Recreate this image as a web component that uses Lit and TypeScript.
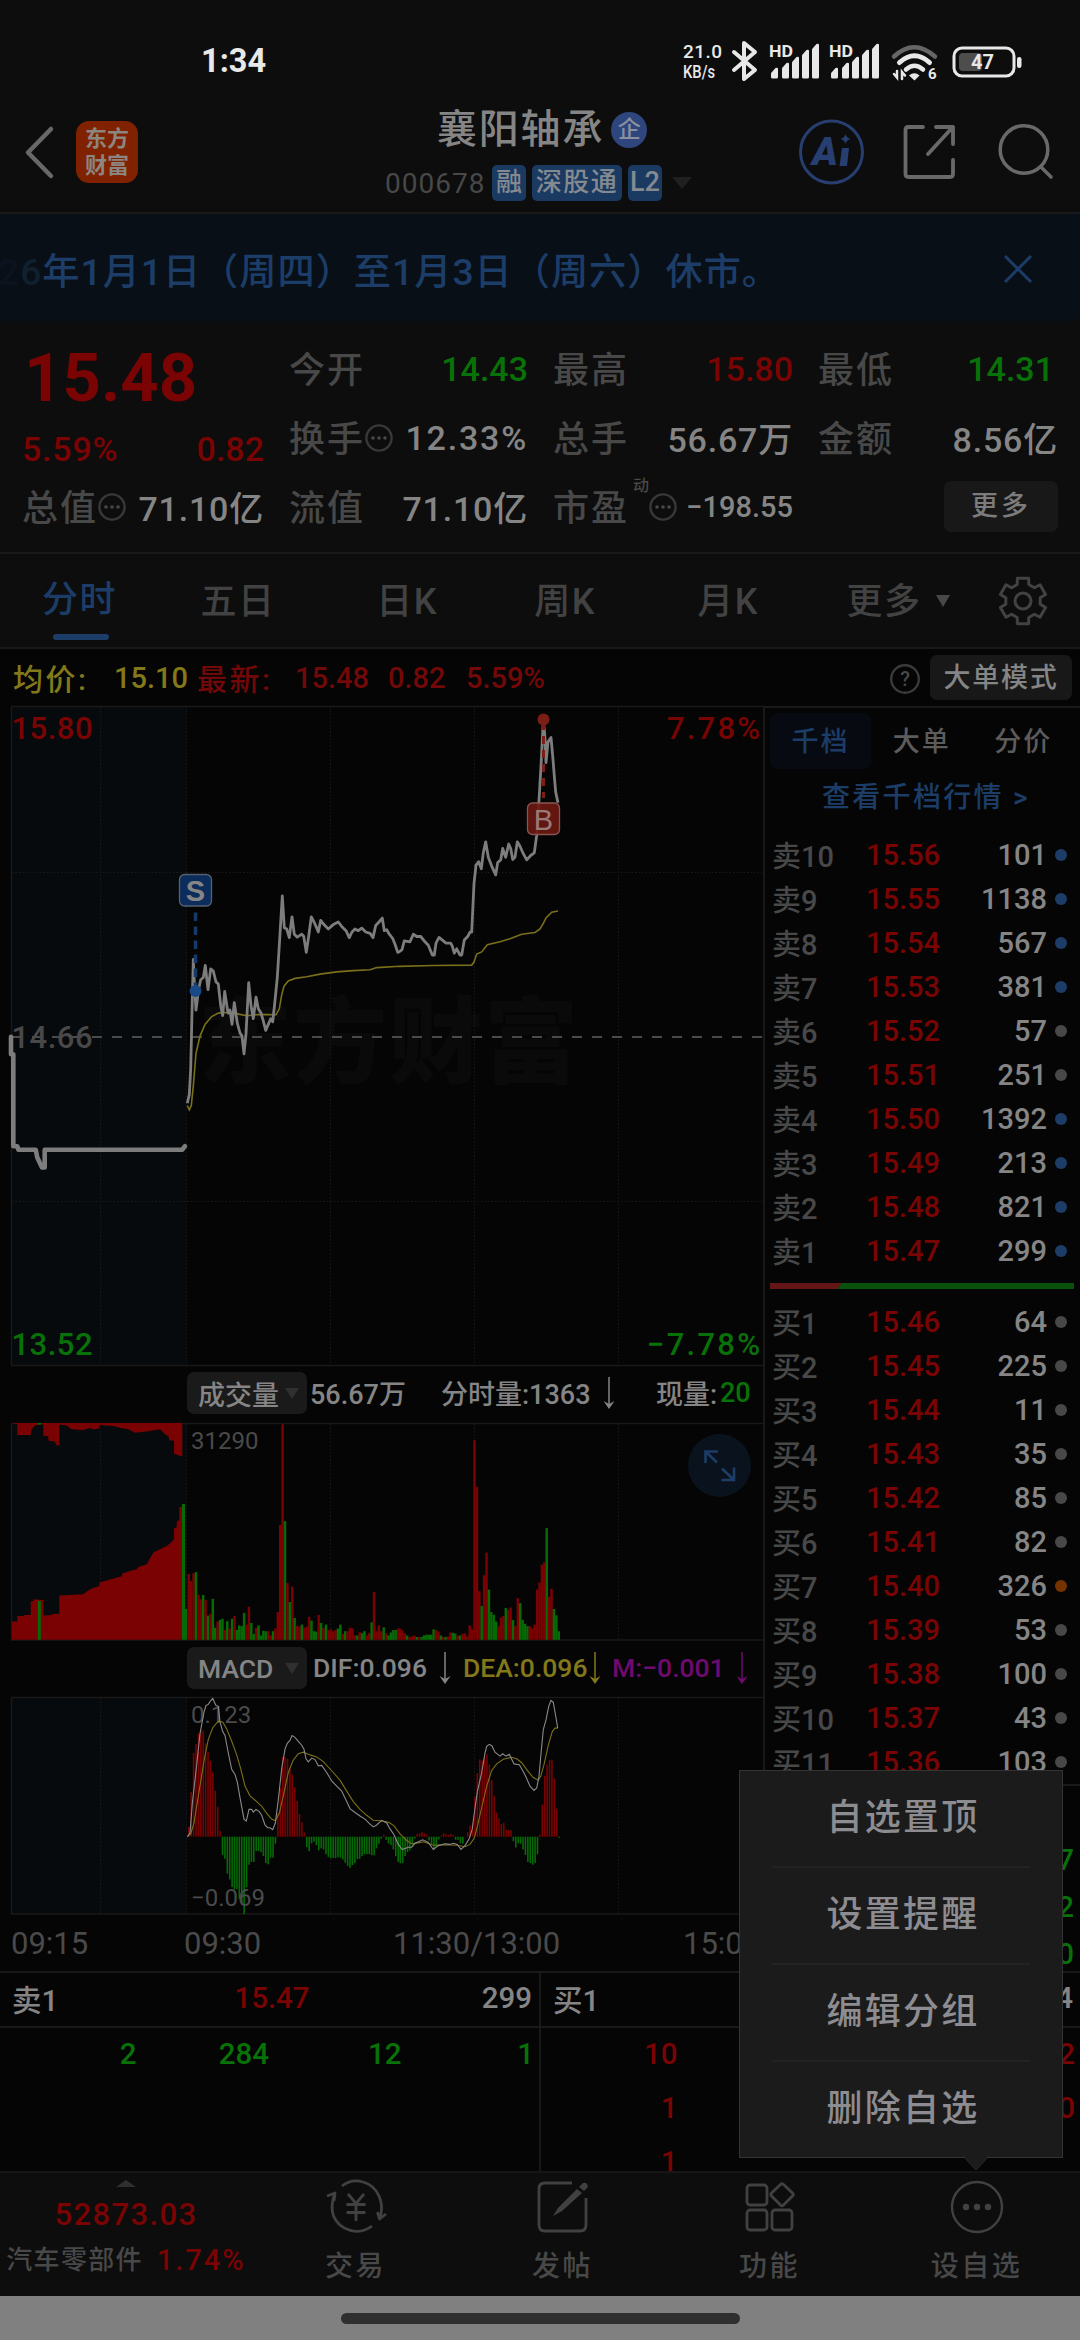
import { LitElement, html, svg, css } from "lit";
import { customElement } from "lit/decorators.js";

type Pt = [number, number];
type Frame = { ox: number; oy: number; kx: number; ky: number };

/* Scales of the sampled series: origin plus units per pixel. */
const PRICE_A: Frame = { ox: 0, oy: 700, kx: 3, ky: 2.306 };
const PRICE_B: Frame = { ox: 400, oy: 690, kx: 3, ky: 2.272 };
const SUB_A: Frame = { ox: 0, oy: 1360, kx: 3, ky: 2.57 };
const SUB_B: Frame = { ox: 390, oy: 1360, kx: 3, ky: 2.57 };

const place = (f: Frame, flat: number[]): Pt[] => {
  const out: Pt[] = [];
  for (let i = 0; i < flat.length; i += 2) {
    out.push([f.ox + flat[i] / f.kx, f.oy + flat[i + 1] / f.ky]);
  }
  return out;
};
const join = (pts: Pt[]) => pts.map((p) => `${p[0].toFixed(1)},${p[1].toFixed(1)}`).join(" ");

const AUCTION = place(PRICE_A, [33, 777, 33, 817, 40, 817, 40, 1029, 52, 1029, 55, 1037, 107, 1037, 112, 1055, 118, 1065, 126, 1078, 134, 1078, 134, 1037, 547, 1037, 555, 1029]);
const PRICE = [
  ...place(PRICE_A, [562, 930, 568, 910, 572, 850, 576, 720, 580, 598, 583, 650, 588, 715, 596, 665, 602, 645, 610, 640, 616, 612, 624, 668, 632, 620, 640, 625, 648, 650, 655, 655, 662, 705, 668, 728, 674, 672, 684, 722, 690, 715, 696, 748, 703, 698, 712, 745, 720, 768, 726, 775, 732, 816, 738, 770, 746, 652, 753, 705, 760, 735, 768, 685, 775, 712, 783, 722, 790, 740, 797, 762, 805, 748, 812, 735, 818, 742, 824, 700, 832, 640, 840, 540, 847, 452, 853, 525, 860, 528, 868, 548, 876, 500, 883, 540, 892, 547, 905, 540, 911, 545, 919, 582, 926, 545, 934, 500, 942, 512, 948, 522, 955, 535, 962, 508, 972, 518, 985, 528, 1000, 518, 1015, 512, 1025, 522, 1038, 532, 1048, 548, 1056, 535, 1065, 528, 1075, 532, 1085, 526, 1097, 535, 1110, 538, 1119, 548, 1127, 520, 1137, 512, 1147, 503, 1153, 532, 1160, 530, 1168, 540, 1178, 550, 1186, 565, 1193, 582, 1199, 580]),
  ...place(PRICE_B, [6, 590, 13, 570, 30, 572, 40, 555, 50, 560, 62, 560, 75, 572, 85, 580, 97, 602, 103, 602, 108, 575, 117, 562, 130, 570, 138, 575, 152, 575, 157, 582, 163, 598, 170, 588, 180, 602, 185, 602, 193, 568, 203, 560, 210, 550, 215, 550, 222, 440, 228, 398, 236, 390, 244, 406, 250, 370, 257, 345, 265, 380, 275, 400, 287, 420, 293, 392, 302, 386, 308, 360, 317, 380, 326, 350, 332, 360, 338, 385, 345, 380, 352, 345, 360, 355, 370, 372, 380, 386, 392, 376, 403, 370, 410, 330, 418, 240, 424, 160, 430, 70, 434, 100, 438, 165, 444, 118, 453, 108, 458, 150, 463, 195, 467, 232, 474, 256]),
];
const AVERAGE = [
  ...place(PRICE_A, [562, 935, 568, 945, 574, 935, 580, 890, 588, 815, 600, 775, 615, 748, 635, 730, 655, 722, 690, 720, 720, 725, 740, 728, 780, 725, 828, 726, 838, 712, 845, 680, 852, 660, 865, 648, 885, 642, 920, 638, 960, 632, 1010, 627, 1060, 624, 1110, 622, 1130, 617, 1199, 614]),
  ...place(PRICE_B, [0, 628, 100, 626, 215, 625, 222, 618, 230, 600, 245, 595, 262, 579, 300, 572, 330, 565, 365, 555, 405, 551, 420, 543, 430, 530, 438, 518, 455, 505, 474, 502]),
];
const MATCHED = place(SUB_A, [36, 719, 36, 672, 52, 672, 52, 658, 72, 658, 72, 655, 92, 655, 92, 620, 100, 620, 100, 615, 130, 617, 130, 657, 155, 655, 155, 653, 178, 652, 178, 605, 250, 602, 260, 595, 275, 587, 298, 581, 298, 572, 330, 564, 365, 556, 368, 548, 390, 542, 410, 538, 415, 532, 440, 525, 460, 495, 475, 488, 500, 478, 515, 468, 522, 460, 522, 433, 530, 430, 530, 415, 538, 412, 538, 378, 546, 378, 546, 719]);
const UNMATCHED = place(SUB_A, [36, 162, 52, 165, 52, 193, 92, 193, 95, 178, 105, 168, 130, 165, 130, 195, 145, 195, 145, 207, 165, 210, 170, 220, 178, 220, 178, 166, 200, 168, 215, 178, 250, 180, 270, 175, 280, 179, 297, 176, 300, 167, 340, 170, 362, 175, 385, 178, 405, 187, 440, 184, 480, 178, 490, 187, 507, 198, 507, 207, 522, 207, 522, 240, 540, 247, 547, 247, 547, 162]);

/* One value per minute; a negative value is a falling minute. */
const VOL_A = [550, 568, 548, -545, 603, 615, -604, 617, -657, 653, -614, -688, 672, -668, -665, 694, -671, 690, -665, 658, -694, -682, -684, -650, 680, 634, -676, -704, 688, -682, -708, -696, -697, 697, 708, -697, 690, 648, 424, 165, -414, 573, -622, 582, -663, 683, 685, -680, 688, 685, 660, -670, -697, -698, 655, -676, 688, -680, 694, 692, 697, 694, -690, -680, 704, -697, 697, 688, 690, 708, -708, 700, -702, -697, 708, 702, -674, 596, 697, 682, 697, -687, 702, -708, -700, -694, -694, 690];
const VOL_B = [690, 695, 702, -708, 712, 710, 708, -712, 712, -712, -708, -706, -706, -706, -692, 694, 698, -708, 712, -712, 710, 700, -701, -703, 708, -708, 704, 702, 710, 682, 692, 206, 326, 594, -632, 553, 495, -590, -648, -655, -672, 684, 662, 658, -637, 642, 636, -668, 684, 612, -625, -668, -678, -684, 684, 690, 680, 590, 572, 526, 520, -432, 608, 588, -640, -656, -697];
const MACD_A = [1200, 1110, 1010, 987, 960, 950, 952, 985, 1008, 1030, 1060, 1107, 1148, 1210, 1272, 1282, 1320, 1335, 1355, 1360, 1360, 1385, 1400, 1424, 1355, 1297, 1290, 1290, 1262, 1262, 1265, 1275, 1293, 1296, 1279, 1279, 1243, 1165, 1100, 1020, 1020, 1025, 1050, 1065, 1098, 1133, 1167, 1188, 1214, 1252, 1262, 1242, 1238, 1247, 1260, 1255, 1258, 1270, 1277, 1280, 1280, 1280, 1278, 1279, 1284, 1292, 1300, 1305, 1298, 1293, 1283, 1282, 1275, 1270, 1270, 1270, 1273, 1273, 1255, 1243, 1230, 1220, 1233, 1242, 1247, 1258, 1275, 1290];
const MACD_B = [1293, 1293, 1275, 1265, 1260, 1245, 1230, 1218, 1217, 1213, 1217, 1220, 1235, 1245, 1258, 1250, 1232, 1222, 1216, 1219, 1221, 1218, 1221, 1233, 1233, 1242, 1243, 1224, 1213, 1196, 1190, 1122, 1062, 1027, 1030, 1023, 1013, 1040, 1080, 1120, 1163, 1178, 1193, 1190, 1207, 1208, 1208, 1237, 1253, 1242, 1243, 1258, 1272, 1290, 1293, 1297, 1293, 1270, 1220, 1143, 1068, 1040, 1028, 1027, 1075, 1153, 1228];
const DIF = [
  ...place(SUB_A, [562, 1225, 570, 1215, 577, 1140, 590, 1040, 600, 960, 612, 905, 618, 888, 625, 885, 632, 875, 638, 870, 648, 888, 655, 890, 660, 930, 668, 955, 675, 965, 685, 1010, 695, 1052, 705, 1065, 712, 1085, 720, 1125, 732, 1180, 739, 1185, 747, 1155, 755, 1155, 760, 1162, 768, 1155, 777, 1160, 785, 1170, 795, 1195, 803, 1202, 810, 1202, 818, 1207, 826, 1190, 835, 1130, 845, 1050, 855, 1000, 862, 985, 870, 978, 876, 965, 885, 970, 895, 980, 905, 990, 912, 1000, 918, 1025, 925, 1033, 935, 1023, 945, 1027, 955, 1043, 965, 1042, 980, 1060, 995, 1082, 1010, 1095, 1025, 1108, 1040, 1135, 1050, 1153, 1065, 1163, 1080, 1172, 1095, 1180, 1110, 1193, 1120, 1200, 1130, 1195, 1145, 1183, 1160, 1190]),
  ...place(SUB_B, [0, 1205, 12, 1220, 25, 1245, 37, 1258, 55, 1252, 65, 1252, 75, 1242, 98, 1233, 115, 1240, 130, 1258, 145, 1248, 165, 1243, 180, 1245, 190, 1242, 202, 1245, 213, 1258, 225, 1248, 238, 1230, 247, 1205, 252, 1170, 262, 1110, 275, 1060, 285, 1010, 290, 993, 298, 988, 306, 992, 315, 1008, 330, 1018, 338, 1012, 348, 1018, 358, 1013, 372, 1038, 388, 1040, 398, 1055, 408, 1072, 420, 1095, 432, 1106, 440, 1100, 447, 1070, 452, 1020, 460, 950, 468, 925, 476, 890, 483, 875, 490, 880, 497, 915, 503, 946]),
];
const DEA = [
  ...place(SUB_A, [562, 1225, 572, 1218, 582, 1190, 597, 1110, 612, 1030, 625, 975, 638, 945, 655, 928, 668, 930, 680, 948, 695, 980, 710, 1015, 722, 1050, 735, 1095, 750, 1120, 770, 1135, 785, 1147, 800, 1165, 815, 1180, 826, 1184, 838, 1165, 850, 1120, 865, 1060, 880, 1028, 895, 1012, 910, 1008, 930, 1015, 950, 1020, 970, 1032, 1000, 1060, 1020, 1080, 1040, 1108, 1060, 1135, 1080, 1155, 1100, 1170, 1120, 1183, 1140, 1184, 1160, 1187]),
  ...place(SUB_B, [0, 1190, 12, 1197, 30, 1218, 50, 1235, 65, 1243, 85, 1241, 100, 1238, 130, 1247, 170, 1246, 200, 1247, 225, 1251, 240, 1245, 252, 1230, 262, 1200, 275, 1150, 290, 1095, 305, 1055, 320, 1038, 340, 1026, 365, 1021, 380, 1025, 395, 1035, 415, 1058, 430, 1073, 445, 1080, 452, 1070, 462, 1040, 475, 990, 487, 955, 495, 946, 503, 946]),
];

const volumeBars = (f: Frame, start: number, vals: number[]) =>
  vals.map((v, i) => {
    const x = f.ox + (start + i * 7.22) / f.kx;
    const y = f.oy + Math.abs(v) / f.ky;
    return svg`<rect class=${v < 0 ? "down" : "up"} x=${x.toFixed(2)} y=${y.toFixed(1)} width="2.5" height=${(1639.8 - y).toFixed(1)} />`;
  });
const ZERO = 1836.7;
const macdBars = (f: Frame, start: number, vals: number[]) =>
  vals.map((v, i) => {
    const x = f.ox + (start + i * 7.22) / f.kx;
    const y = f.oy + v / f.ky;
    return svg`<rect class=${v > 1225 ? "down" : "up"} x=${x.toFixed(2)} y=${Math.min(y, ZERO).toFixed(1)} width="1.6" height=${Math.abs(ZERO - y).toFixed(1)} />`;
  });
const gridColumns = (y1: number, y2: number) =>
  [100.5, 186.5, 330.5, 474.5, 618.5].map((x) => svg`<line class="dots" x1=${x} x2=${x} y1=${y1} y2=${y2} />`);

const SELLS: [string, string, string, string][] = [
  ["卖10", "15.56", "101", "b"], ["卖9", "15.55", "1138", "b"], ["卖8", "15.54", "567", "b"],
  ["卖7", "15.53", "381", "b"], ["卖6", "15.52", "57", "g"], ["卖5", "15.51", "251", "g"],
  ["卖4", "15.50", "1392", "b"], ["卖3", "15.49", "213", "b"], ["卖2", "15.48", "821", "b"],
  ["卖1", "15.47", "299", "b"],
];
const BUYS: [string, string, string, string][] = [
  ["买1", "15.46", "64", "g"], ["买2", "15.45", "225", "g"], ["买3", "15.44", "11", "g"],
  ["买4", "15.43", "35", "g"], ["买5", "15.42", "85", "g"], ["买6", "15.41", "82", "g"],
  ["买7", "15.40", "326", "o"], ["买8", "15.39", "53", "g"], ["买9", "15.38", "100", "g"],
  ["买10", "15.37", "43", "g"], ["买11", "15.36", "103", "g"],
];

const base = css`
  * { box-sizing: border-box; }
  :host { display: block; font-family: Roboto, "Noto Sans CJK SC", sans-serif; font-weight: 500; color: #858585; white-space: nowrap; }
  svg { display: block; flex: none; overflow: visible; }
  .red { color: #7a0303; }
  .green { color: #087208; }
`;

@customElement("status-bar")
class StatusBar extends LitElement {
  static styles = [base, css`
    :host { height: 97px; padding: 25px 55px 0 201px; display: flex; align-items: center; justify-content: space-between; color: #e8e8e8; }
    .clock { font-size: 32.5px; font-weight: 700; }
  `];
  signal(x: number) {
    return svg`<g transform="translate(${x} 0)">
      <text x="-1" y="16.500" font-size="17" font-weight="700" fill="#e8e8e8" textLength="24" lengthAdjust="spacingAndGlyphs">HD</text>
      ${[[1, 31], [12, 26], [22, 20], [32, 13], [42, 7]].map(([bx, by]) => svg`<path d="M${bx} 37 q0 1.5 1.5 1.5 h4 q1.5 0 1.5 -1.5 V${by - 2} q0 -2 -2.5 -1 L${bx + 1} ${by + 1} q-1 .5 -1 2 Z" fill="#e8e8e8" />`)}
    </g>`;
  }
  render() {
    return html`
      <span class="clock">1:34</span>
      <svg width="342" height="42" viewBox="0 0 342 42">
        <text x="0" y="18" font-size="19" fill="#e8e8e8" textLength="39">21.0</text>
        <text x="0" y="38" font-size="17.500" fill="#e8e8e8" textLength="32" lengthAdjust="spacingAndGlyphs">KB/s</text>
        <path d="M51 12 L72 30 L61 39 V3 L72 12 L51 30" fill="none" stroke="#e8e8e8" stroke-width="4" stroke-linejoin="round" stroke-linecap="round" />
        ${this.signal(87)}${this.signal(147)}
        <g fill="none" stroke-linecap="round">
          <path d="M211 16.500 Q231 -2 252 16.500" stroke="#666" stroke-width="4.5" />
          <path d="M216.500 22.500 Q231.500 9 246.500 22.500" stroke="#e8e8e8" stroke-width="5" />
          <path d="M223 29.500 Q231.500 22 240 29.500" stroke="#e8e8e8" stroke-width="4.500" />
          <path d="M211 34 L214 37.500 V31 M219 39 V32 L222 35.500" stroke="#e8e8e8" stroke-width="2.500" />
        </g>
        <path d="M226 35.500 Q231.500 31 236.500 35.500 L231.500 40.500 Z" fill="#e8e8e8" />
        <text x="245" y="39" font-size="15" font-weight="700" fill="#e8e8e8">6</text>
        <rect x="271" y="8" width="60" height="28" rx="8" fill="none" stroke="#e8e8e8" stroke-width="3" />
        <rect x="276" y="13" width="23" height="18" rx="4" fill="#4d4d4d" />
        <rect x="334" y="17" width="4.500" height="11" rx="2.200" fill="#e8e8e8" />
        <text x="288" y="29" font-size="20" font-weight="700" fill="#e8e8e8">47</text>
      </svg>`;
  }
}

@customElement("stock-header")
class StockHeader extends LitElement {
  static styles = [base, css`
    :host { height: 117px; border-bottom: 2px solid #191919; display: grid; grid-template-columns: 76px 62px 660.5px 105px 95px 1fr; align-items: center; }
    .back { margin-left: 25px; }
    .logo { width: 62px; height: 62px; border-radius: 13px; background: #802200; color: #8c8580; font-size: 22px; line-height: 27px; font-weight: 700; text-align: center; padding-top: 4px; margin-bottom: 6px; }
    .mid { display: flex; flex-direction: column; padding-left: 247px; padding-bottom: 6px; }
    .name { display: flex; align-items: center; font-size: 40px; letter-spacing: 1.8px; line-height: 48px; height: 54px; padding: 2px 0 0 52px; color: #858585; }
    .corp { width: 36px; height: 36px; border-radius: 50%; background: #2f457d; font-size: 23px; line-height: 35px; text-align: center; letter-spacing: 0; margin-left: 7px; color: #8b90a0; }
    .tags { display: flex; align-items: center; height: 36px; margin-top: 9px; }
    .code { color: #484848; font-size: 28px; font-weight: 400; width: 107px; letter-spacing: 1px; }
    .tag { background: #1a3a62; color: #858a90; border-radius: 5px; height: 36px; line-height: 35px; font-size: 26px; text-align: center; margin-right: 6px; }
    .t1 { width: 34px; } .t2 { width: 90px; letter-spacing: 1.5px; } .t3 { width: 34px; font-size: 27px; margin-right: 10px; }
    .ico { margin-bottom: 6px; }
  `];
  render() {
    return html`
      <svg class="back ico" width="30" height="54" viewBox="0 0 30 54"><path d="M26 4 L3 27.500 L26 51" fill="none" stroke="#686868" stroke-width="4.500" stroke-linecap="round" stroke-linejoin="round" /></svg>
      <div class="logo">东方<br />财富</div>
      <div class="mid">
        <div class="name">襄阳轴承<span class="corp">企</span></div>
        <div class="tags">
          <span class="code">000678</span><span class="tag t1">融</span><span class="tag t2">深股通</span><span class="tag t3">L2</span>
          <svg width="20" height="12"><path d="M0 0 H20 L10 12 Z" fill="#202020" /></svg>
        </div>
      </div>
      <svg class="ico" width="66" height="66" viewBox="0 0 66 66">
        <circle cx="32.500" cy="33" r="31" fill="none" stroke="#263f70" stroke-width="3" />
        <text x="13" y="45.500" font-size="39" font-weight="900" font-style="italic" fill="#263f70" textLength="26" lengthAdjust="spacingAndGlyphs">A</text>
        <path d="M43 29 H50 L48 47 H40.500 Z M46.500 15 Q47.500 19 51.500 20 Q47.500 21 46.500 25 Q45.500 21 41.500 20 Q45.500 19 46.500 15 Z" fill="#263f70" />
      </svg>
      <svg class="ico" width="52" height="54" viewBox="0 0 52 54"><path d="M19 2 H4 Q1.500 2 1.500 5 V49 Q1.500 52 4.500 52 H46 Q49 52 49 49 V35 M32 2 H49 V19 M48 3 L24 29" fill="none" stroke="#696969" stroke-width="3.800" stroke-linecap="round" stroke-linejoin="round" /></svg>
      <svg class="ico" width="56" height="54" viewBox="0 0 56 54" ><g fill="none" stroke="#696969" stroke-width="3.500" stroke-linecap="round"><circle cx="25" cy="24.500" r="23.800" /><path d="M42 42 L52 52" /></g></svg>`;
  }
}

@customElement("notice-bar")
class NoticeBar extends LitElement {
  static styles = [base, css`
    :host { height: 110px; background: linear-gradient(#090f16 94%, #0d0d0d); display: flex; align-items: center; justify-content: space-between; padding: 0 49px 0 0; color: #1c3d68; }
    .msg { font-size: 37.2px; margin-left: -2px; letter-spacing: 1px; }
    .y { color: #10202f; } .y1 { color: #0b141e; }
  `];
  render() {
    return html`<span class="msg"><span class="y1">2</span><span class="y">6</span>年1月1日（周四）至1月3日（周六）休市。</span>
      <svg width="26" height="26"><path d="M0 0 L26 26 M26 0 L0 26" stroke="#1c3d68" stroke-width="3" /></svg>`;
  }
}

@customElement("quote-panel")
class QuotePanel extends LitElement {
  static styles = [base, css`
    :host { height: 230px; border-bottom: 2px solid #191919; display: grid; grid-template-columns: 242px 239px 240px 240px; column-gap: 25px; padding: 10px 0 12px 22px; font-size: 34px; grid-template-rows: 207px; align-items: center; }
    .col { display: grid; grid-template-rows: repeat(3, 69px); align-items: center; }
    .cell { display: flex; align-items: center; justify-content: space-between; }
    .k { color: #484848; font-size: 36px; letter-spacing: 2px; display: flex; align-items: center; margin-top: -4px; }
    .k svg { margin-top: 4px; }
    .k sup { font-size: 16px; align-self: flex-start; line-height: 14px; letter-spacing: 0; margin-left: 4px; }
    .last { font-size: 67px; font-weight: 700; padding-left: 2px; align-self: start; line-height: 88px; }
    .sub { padding-top: 22px; }
    .s1 { font-size: 29px; }
    .w { letter-spacing: .8px; }
    .wide { letter-spacing: 1.800px; }
    .more { width: 114px; height: 51px; border-radius: 7px; background: #181818; font-size: 27px; text-align: center; line-height: 50px; letter-spacing: 3px; margin-left: auto; color: #7c7c7c; }
    .l4 { padding-right: 4px; }
  `];
  dots() {
    return html`<svg width="28" height="28" viewBox="0 0 28 28"><circle cx="14" cy="14" r="12.600" fill="none" stroke="#383838" stroke-width="2.400" /><g fill="#484848"><circle cx="8" cy="14" r="1.800" /><circle cx="14" cy="14" r="1.800" /><circle cx="20" cy="14" r="1.800" /></g></svg>`;
  }
  render() {
    return html`
      <div class="col">
        <div class="last red">15.48</div>
        <div class="cell sub red"><span class="w">5.59%</span><span>0.82</span></div>
        <div class="cell"><span class="k">总值${this.dots()}</span><span class="w">71.10亿</span></div>
      </div>
      <div class="col">
        <div class="cell"><span class="k">今开</span><span class="green">14.43</span></div>
        <div class="cell"><span class="k">换手${this.dots()}</span><span class="wide">12.33%</span></div>
        <div class="cell"><span class="k">流值</span><span class="w">71.10亿</span></div>
      </div>
      <div class="col">
        <div class="cell"><span class="k">最高</span><span class="red">15.80</span></div>
        <div class="cell"><span class="k">总手</span><span class="w">56.67万</span></div>
        <div class="cell"><span class="k">市盈<sup>动</sup>${this.dots()}</span><span class="s1">−198.55</span></div>
      </div>
      <div class="col">
        <div class="cell l4"><span class="k">最低</span><span class="green">14.31</span></div>
        <div class="cell"><span class="k">金额</span><span class="w">8.56亿</span></div>
        <div class="cell"><span class="more">更多</span></div>
      </div>`;
  }
}

@customElement("period-tabs")
class PeriodTabs extends LitElement {
  static styles = [base, css`
    :host { height: 95px; border-bottom: 2px solid #191919; display: grid; grid-template-columns: 156px 164px 174px 142px 184px 156px 94px; color: #424242; font-size: 36px; }
    .tab { display: flex; align-items: center; justify-content: center; letter-spacing: 1.5px; gap: 14px; padding-bottom: 5px; }
    .tab svg { margin-top: 5px; }
    .on { color: #1c3d68; flex-direction: column; gap: 0; padding: 0 0 0 3px; }
    .on span { line-height: 52px; padding-top: 13px; }
    .on i { width: 56px; height: 6px; border-radius: 3px; background: #1c3d68; margin: 8px 0 0 2px; }
  `];
  render() {
    const gear: string[] = [];
    for (let i = 0; i < 6; i++) {
      const a = (i * 60 - 90) * Math.PI / 180;
      const at = (r: number, d: number) => `${(25 + r * Math.cos(a + d)).toFixed(1)} ${(25 + r * Math.sin(a + d)).toFixed(1)}`;
      gear.push(`${at(17.5, -0.34)} L${at(23.5, -0.24)} L${at(23.5, 0.24)} L${at(17.5, 0.34)}`);
    }
    return html`
      <div class="tab on"><span>分时</span><i></i></div>
      <div class="tab">五日</div><div class="tab">日K</div><div class="tab">周K</div><div class="tab">月K</div>
      <div class="tab">更多<svg width="14" height="12"><path d="M0 0 H14 L7 12 Z" fill="#484848" /></svg></div>
      <div class="tab"><svg width="50" height="50" viewBox="0 0 50 50"><g fill="none" stroke="#424242" stroke-width="3" stroke-linejoin="round"><path d="M${gear.join(" L")} Z" /><circle cx="25" cy="25" r="8" /></g></svg></div>`;
  }
}

@customElement("legend-row")
class LegendRow extends LitElement {
  static styles = [base, css`
    :host { height: 57px; background: #050505; display: grid; grid-template-columns: 101px 83px 98px 93px 78px 1fr 28px 154px; padding: 0 8px 0 13px; align-items: center; font-size: 29px; }
    .y { color: #83791a; }
    .red { color: #720808; }
    .k { font-size: 30px; margin-top: -2px; letter-spacing: 2.500px; }
    .btn { margin-left: 12px; height: 45px; border-radius: 7px; background: #181818; font-size: 27px; letter-spacing: 1.8px; line-height: 46px; text-align: center; }
    svg { margin-top: 2px; }
  `];
  render() {
    return html`
      <span class="y k">均价:</span><span class="y">15.10</span><span class="red k">最新:</span><span class="red">15.48</span><span class="red">0.82</span><span class="red">5.59%</span>
      <svg width="30" height="30" viewBox="0 0 30 30"><circle cx="15" cy="15" r="13.800" fill="none" stroke="#3b3b3b" stroke-width="2.400" /><text x="15" y="22" text-anchor="middle" font-size="20" fill="#484848">?</text></svg>
      <span class="btn">大单模式</span>`;
  }
}

@customElement("price-chart")
class PriceChart extends LitElement {
  static styles = [base, css`
    .dots { stroke: #191919; stroke-width: 1.2; stroke-dasharray: 1.5 2; }
    .up { fill: #7a0202; } .down { fill: #066a06; }
    .frame { fill: none; stroke: #191919; stroke-width: 1.5; }
    .shade { fill: #060a0d; }
    .price { fill: none; stroke: #7d7d7d; stroke-width: 2.8; stroke-linejoin: round; }
    .auction { fill: none; stroke: #7d7d7d; stroke-width: 4.6; stroke-linejoin: round; stroke-linecap: round; }
    .avg { fill: none; stroke: #7a701a; stroke-width: 1.6; }
    .thin { fill: none; stroke: #8a8a8a; stroke-width: 1.1; }
    .thiny { fill: none; stroke: #7a701a; stroke-width: 1.1; }
    .lab { font-size: 31px; } .small { font-size: 24px; fill: #4a4a4a; font-weight: 400; }
    .r { fill: #7a0303; } .g { fill: #087208; } .n { fill: #484848; }
    .bar { display: grid; align-items: center; font-size: 27px; padding-left: 187px; }
    .vol { height: 57px; grid-template-columns: 123px 131px 162px 53px 64px 1fr; padding-bottom: 4px; }
    .macd { height: 57px; grid-template-columns: 126px 126px 24px 126px 23px 124px 1fr; padding-bottom: 4px; font-size: 26.500px; }
    .pill { width: 120px; height: 42px; border-radius: 7px; background: #1a1a1a; display: flex; align-items: center; justify-content: space-between; padding: 0 8px 0 11px; margin-top: 1px; }
    .y { color: #83791a; } .m { color: #6f0a6f; }
    .axis { height: 57px; display: grid; grid-template-columns: 173px 209px 290px 1fr; padding-left: 11px; align-items: center; font-size: 31px; color: #4a4a4a; font-weight: 400; }
    .wm { font-size: 94px; font-weight: 900; fill: #0a0a0a; }
  `];
  arrow(c: string) {
    return html`<svg width="12" height="32" viewBox="0 0 12 32"><path d="M6 0 V30" stroke=${c} stroke-width="1.500" /><path d="M0.500 24 L6 27 L11.500 24 L6 32 Z" fill=${c} /></svg>`;
  }
  caret() {
    return html`<svg width="14" height="11"><path d="M0 0 H14 L7 11 Z" fill="#303030" /></svg>`;
  }
  render() {
    return html`
      <svg width="763" height="660" viewBox="0 706 763 660">
        <rect class="shade" x="11.500" y="706" width="175" height="659" />
        <text class="wm" x="198" y="1076" textLength="380">东方财富</text>
        ${gridColumns(707, 1365)}
        <path class="dots" d="M12 872.500 H762 M12 1201.500 H762" />
        <path class="frame" d="M763 706.500 H11.500 V1365.500 H763" />
        <text class="lab n" x="11.500" y="1047.500" textLength="81">14.66</text>
        <path d="M12 1037 H762" stroke="#4a4a4a" stroke-width="2" stroke-dasharray="10 10" />
        <text class="lab r" x="11.500" y="739" textLength="81">15.80</text>
        <text class="lab r" x="667" y="739" textLength="93">7.78%</text>
        <text class="lab g" x="11.500" y="1355" textLength="81">13.52</text>
        <text class="lab g" x="647" y="1355" textLength="113">−7.78%</text>
        <polyline class="avg" points=${join(AVERAGE)} />
        <polyline class="auction" points=${join(AUCTION)} />
        <polyline class="price" points=${join(PRICE)} />
        <path d="M195.500 912.500 V985" stroke="#143a6b" stroke-width="3.500" stroke-dasharray="8.500 5.500" />
        <circle cx="195.500" cy="991" r="6" fill="#1a4a86" />
        <rect x="179.500" y="874.500" width="32" height="31.500" rx="5" fill="#0c2d5c" stroke="#56606e" stroke-width="1.300" />
        <text x="195.500" y="901" text-anchor="middle" font-size="29" fill="#858585" font-family="Liberation Sans" font-weight="700">S</text>
        <path d="M543.500 722 V798" stroke="#7a1e17" stroke-width="3" stroke-dasharray="8 6" />
        <circle cx="543.500" cy="719.500" r="6" fill="#7a1e17" />
        <rect x="527.500" y="803" width="32" height="31.500" rx="5" fill="#6b1812" fill-opacity=".9" stroke="#8a5550" stroke-width="1.300" />
        <text x="543.500" y="829.500" text-anchor="middle" font-size="29" fill="#9a7a78" font-family="Liberation Sans" font-weight="400">B</text>
      </svg>
      <div class="bar vol">
        <span class="pill">成交量${this.caret()}</span><span>56.67万</span><span>分时量:1363</span>${this.arrow("#858585")}<span>现量:</span><span class="green">20</span>
      </div>
      <svg width="763" height="218" viewBox="0 1423 763 218">
        <rect class="shade" x="11.500" y="1423" width="175" height="217" />
        ${gridColumns(1424, 1639)}
        <path class="frame" d="M763 1423.500 H11.500 V1640 H763" />
        <text class="small" x="191" y="1449">31290</text>
        <polygon class="up" points=${join(MATCHED)} />
        <polygon class="up" points=${join(UNMATCHED)} />
        <path class="down" d="M37.800 1601 h3 V1639.800 h-3 Z M182 1504 h3 V1639.800 h-3 Z M185 1609 h2.400 V1639.800 h-2.400 Z M38 1423 h3 v1.500 h-3 Z" />
        ${volumeBars(SUB_A, 562.5, VOL_A)}${volumeBars(SUB_B, 26, VOL_B)}
        <circle cx="719.500" cy="1465.500" r="31.500" fill="#0a131d" />
        <path d="M705.500 1463 V1451.500 H718 M706 1452 L717 1462.500 M721.500 1480 H734 V1467.500 M733.500 1479.500 L722 1468.500" fill="none" stroke="#1c3d68" stroke-width="2.600" />
      </svg>
      <div class="bar macd">
        <span class="pill">MACD${this.caret()}</span><span>DIF:0.096</span>${this.arrow("#858585")}<span class="y">DEA:0.096</span>${this.arrow("#83791a")}<span class="m">M:−0.001</span>${this.arrow("#6f0a6f")}
      </div>
      <svg width="763" height="217" viewBox="0 1698 763 217">
        <rect class="shade" x="11.500" y="1697" width="175" height="217" />
        ${gridColumns(1698, 1914)}
        <path class="frame" d="M763 1697.500 H11.500 V1914 H763" />
        ${macdBars(SUB_A, 564, MACD_A)}${macdBars(SUB_B, 28.5, MACD_B)}
        <text class="small" x="191" y="1723">0.123</text>
        <text class="small" x="191" y="1906">−0.069</text>
        <polyline class="thiny" points=${join(DEA)} />
        <polyline class="thin" points=${join(DIF)} />
      </svg>
      <div class="axis"><span>09:15</span><span>09:30</span><span>11:30/13:00</span><span>15:00</span></div>`;
  }
}

@customElement("order-book")
class OrderBook extends LitElement {
  static styles = [base, css`
    :host { border-left: 2px solid #191919; border-top: 2px solid #191919; padding: 5px 6px 0 5px; font-size: 29px; height: 1266px; }
    .tabs { display: grid; grid-template-columns: 101px 1fr 1fr; height: 56px; font-size: 27px; line-height: 58px; text-align: center; color: #5c5c5c; letter-spacing: 2px; }
    .on { background: #070b11; border-radius: 8px; color: #1c3d68; height: 56px; }
    .link { height: 64px; line-height: 58px; font-size: 28px; letter-spacing: 2.300px; color: #1c3d68; padding-left: 52px; }
    .row { display: grid; grid-template-columns: 94px 1fr 87px 27px; height: 44px; align-items: center; padding-left: 2px; }
    .k { color: #484848; margin-top: -3px; }
    .q { text-align: right; }
    .dot { width: 12px; height: 12px; border-radius: 50%; justify-self: center; }
    .b { background: #1c3d68; } .g { background: #484848; } .o { background: #763300; }
    .ratio { display: block; margin: 10px 0 11px; }
    .rest { border-top: 2px solid #191919; margin: 0 -6px 0 -5px; padding: 51px 6px 0 0; text-align: right; height: 192px; }
    .rest div { height: 47px; line-height: 47px; }
  `];
  row(r: [string, string, string, string]) {
    return html`<div class="row"><span class="k">${r[0]}</span><span class="red">${r[1]}</span><span class="q">${r[2]}</span><i class="dot ${r[3]}"></i></div>`;
  }
  render() {
    return html`
      <div class="tabs"><span class="on">千档</span><span>大单</span><span>分价</span></div>
      <div class="link">查看千档行情 &gt;</div>
      ${SELLS.map((r) => this.row(r))}
      <svg class="ratio" width="304" height="6" viewBox="0 0 304 6"><path d="M0 0 H72 L67 6 H0 Z" fill="#641616" /><path d="M72 0 H304 V6 H67 Z" fill="#0a520c" /></svg>
      ${BUYS.map((r) => this.row(r))}
      <div class="rest green"><div>7</div><div>2</div><div>0</div></div>`;
  }
}

@customElement("queue-table")
class QueueTable extends LitElement {
  static styles = [base, css`
    :host { height: 200px; border-top: 2px solid #191919; display: grid; grid-template-columns: 541px 1fr; background: #050505; overflow: hidden; font-size: 29.500px; }
    .side { border-right: 2px solid #191919; }
    .side:last-child { border: 0; }
    .top { display: grid; grid-template-columns: 1fr auto 1fr; height: 55px; align-items: center; border-bottom: 2px solid #191919; padding: 0 7px 4px 12px; }
    .top :last-child { text-align: right; }
    .nums { display: grid; grid-template-columns: repeat(4, 132.500px); padding: 0 0 0 4px; }
    .nums span { text-align: right; height: 54px; line-height: 52px; }
  `];
  render() {
    return html`
      <div class="side"><div class="top"><span>卖1</span><span class="red">15.47</span><span>299</span></div>
        <div class="nums green"><span>2</span><span>284</span><span>12</span><span>1</span></div></div>
      <div class="side"><div class="top"><span>买1</span><span></span><span>64</span></div>
        <div class="nums red"><span>10</span><span></span><span></span><span>2</span><span>1</span><span></span><span></span><span>0</span><span>1</span></div></div>`;
  }
}

@customElement("bottom-nav")
class BottomNav extends LitElement {
  static styles = [base, css`
    :host { height: 125px; border-top: 2px solid #161616; display: grid; grid-template-columns: 252px repeat(4, 207px); background: #0d0d0d; }
    .index { display: flex; flex-direction: column; align-items: center; padding-top: 7px; }
    .v { font-size: 31px; letter-spacing: 1.400px; line-height: 36px; margin-top: 10px; }
    .sec { display: flex; align-items: center; gap: 14px; font-size: 26px; letter-spacing: 1.300px; color: #484848; margin-top: 7px; line-height: 40px; }
    .sec .red { font-size: 29px; letter-spacing: 2px; }
    .item { display: flex; flex-direction: column; align-items: center; font-size: 28px; letter-spacing: 2.500px; color: #484848; padding-top: 7px; }
    .item span { line-height: 40px; margin-top: 13px; }
  `];
  render() {
    const s = "#414141";
    return html`
      <div class="index">
        <svg width="20" height="7"><path d="M0 7 H20 L10 0 Z" fill="#303030" /></svg>
        <span class="v red">52873.03</span>
        <span class="sec">汽车零部件<span class="red">1.74%</span></span>
      </div>
      <div class="item"><svg width="60" height="54" viewBox="0 0 60 54"><g fill="none" stroke=${s} stroke-width="2.800" stroke-linejoin="round"><path d="M16 6 C29 -4 47 2 53 16 Q58 27 53.500 39 L60 34 M53.500 39 L51.500 32 M46 46 C33 56 14 51 7.500 36 Q4 26 9 13 M1 16 L9 13 L8 21" /><path d="M22 14 L30 23.500 L38 14 M30 23.500 V41 M20.500 24.500 H39.500 M20.500 32.500 H39.500" /></g></svg><span>交易</span></div>
      <div class="item"><svg width="54" height="54" viewBox="0 0 54 54"><path d="M36 3 H9 Q3 3 3 9 V45 Q3 51 9 51 H44 Q50 51 50 45 V18" fill="none" stroke=${s} stroke-width="2.800" /><path d="M45 5 Q48 1 51 4 Q53 7 50 9 L48 11 L43 7 Z M41 9 L46 13 L26 31 L17 36 L22 28 Z" fill=${s} /></svg><span>发帖</span></div>
      <div class="item"><svg width="54" height="54" viewBox="0 0 54 54"><g fill="none" stroke=${s} stroke-width="2.800" stroke-linejoin="round"><rect x="4" y="5" width="20" height="20" rx="3" /><rect x="4" y="30" width="20" height="20" rx="3" /><rect x="29" y="30" width="20" height="20" rx="3" /><path d="M37.500 4.500 Q39 3 40.500 4.500 L49.500 13 Q51 14.500 49.500 16 L40.500 25 Q39 26.500 37.500 25 L28.500 16 Q27 14.500 28.500 13 Z" /></g></svg><span>功能</span></div>
      <div class="item"><svg width="54" height="54" viewBox="0 0 54 54"><circle cx="27" cy="27" r="25" fill="none" stroke=${s} stroke-width="2.400" /><g fill=${s}><circle cx="16" cy="27" r="3.200" /><circle cx="27" cy="27" r="3.200" /><circle cx="38" cy="27" r="3.200" /></g></svg><span>设自选</span></div>`;
  }
}

@customElement("app-root")
class AppRoot extends LitElement {
  static styles = [base, css`
    :host { width: 1080px; height: 2340px; background: #0d0d0d; position: relative; overflow: hidden; }
    .body { display: grid; grid-template-columns: 763px 317px; background: #050505; height: 1265px; }
    .home { height: 44px; background: #808080; display: flex; justify-content: center; padding-top: 17px; }
    .home i { width: 399px; height: 11px; border-radius: 6px; background: #2f2f2f; }
    .menu { position: absolute; left: 739px; top: 1770px; width: 324px; height: 388px; background: #1b1b1b; border: 1.500px solid #333; padding: 0 32px; color: #8c8c91; font-size: 36px; letter-spacing: 2.200px; }
    .menu div { height: 97px; line-height: 95px; text-align: center; border-bottom: 2px solid #232323; padding-left: 4px; }
    .menu div:nth-child(4) { border: 0; }
    .tip { position: absolute; left: 223px; top: 385px; }
  `];
  render() {
    return html`
      <status-bar></status-bar>
      <stock-header></stock-header>
      <notice-bar></notice-bar>
      <quote-panel></quote-panel>
      <period-tabs></period-tabs>
      <legend-row></legend-row>
      <div class="body"><price-chart></price-chart><order-book></order-book></div>
      <queue-table></queue-table>
      <bottom-nav></bottom-nav>
      <div class="home"><i></i></div>
      <div class="menu">
        <div>自选置顶</div><div>设置提醒</div><div>编辑分组</div><div>删除自选</div>
        <svg class="tip" width="26" height="15"><path d="M0 0 L13 14 L26 0" fill="#1b1b1b" stroke="#2c2c2c" stroke-width="1" /></svg>
      </div>`;
  }
}
